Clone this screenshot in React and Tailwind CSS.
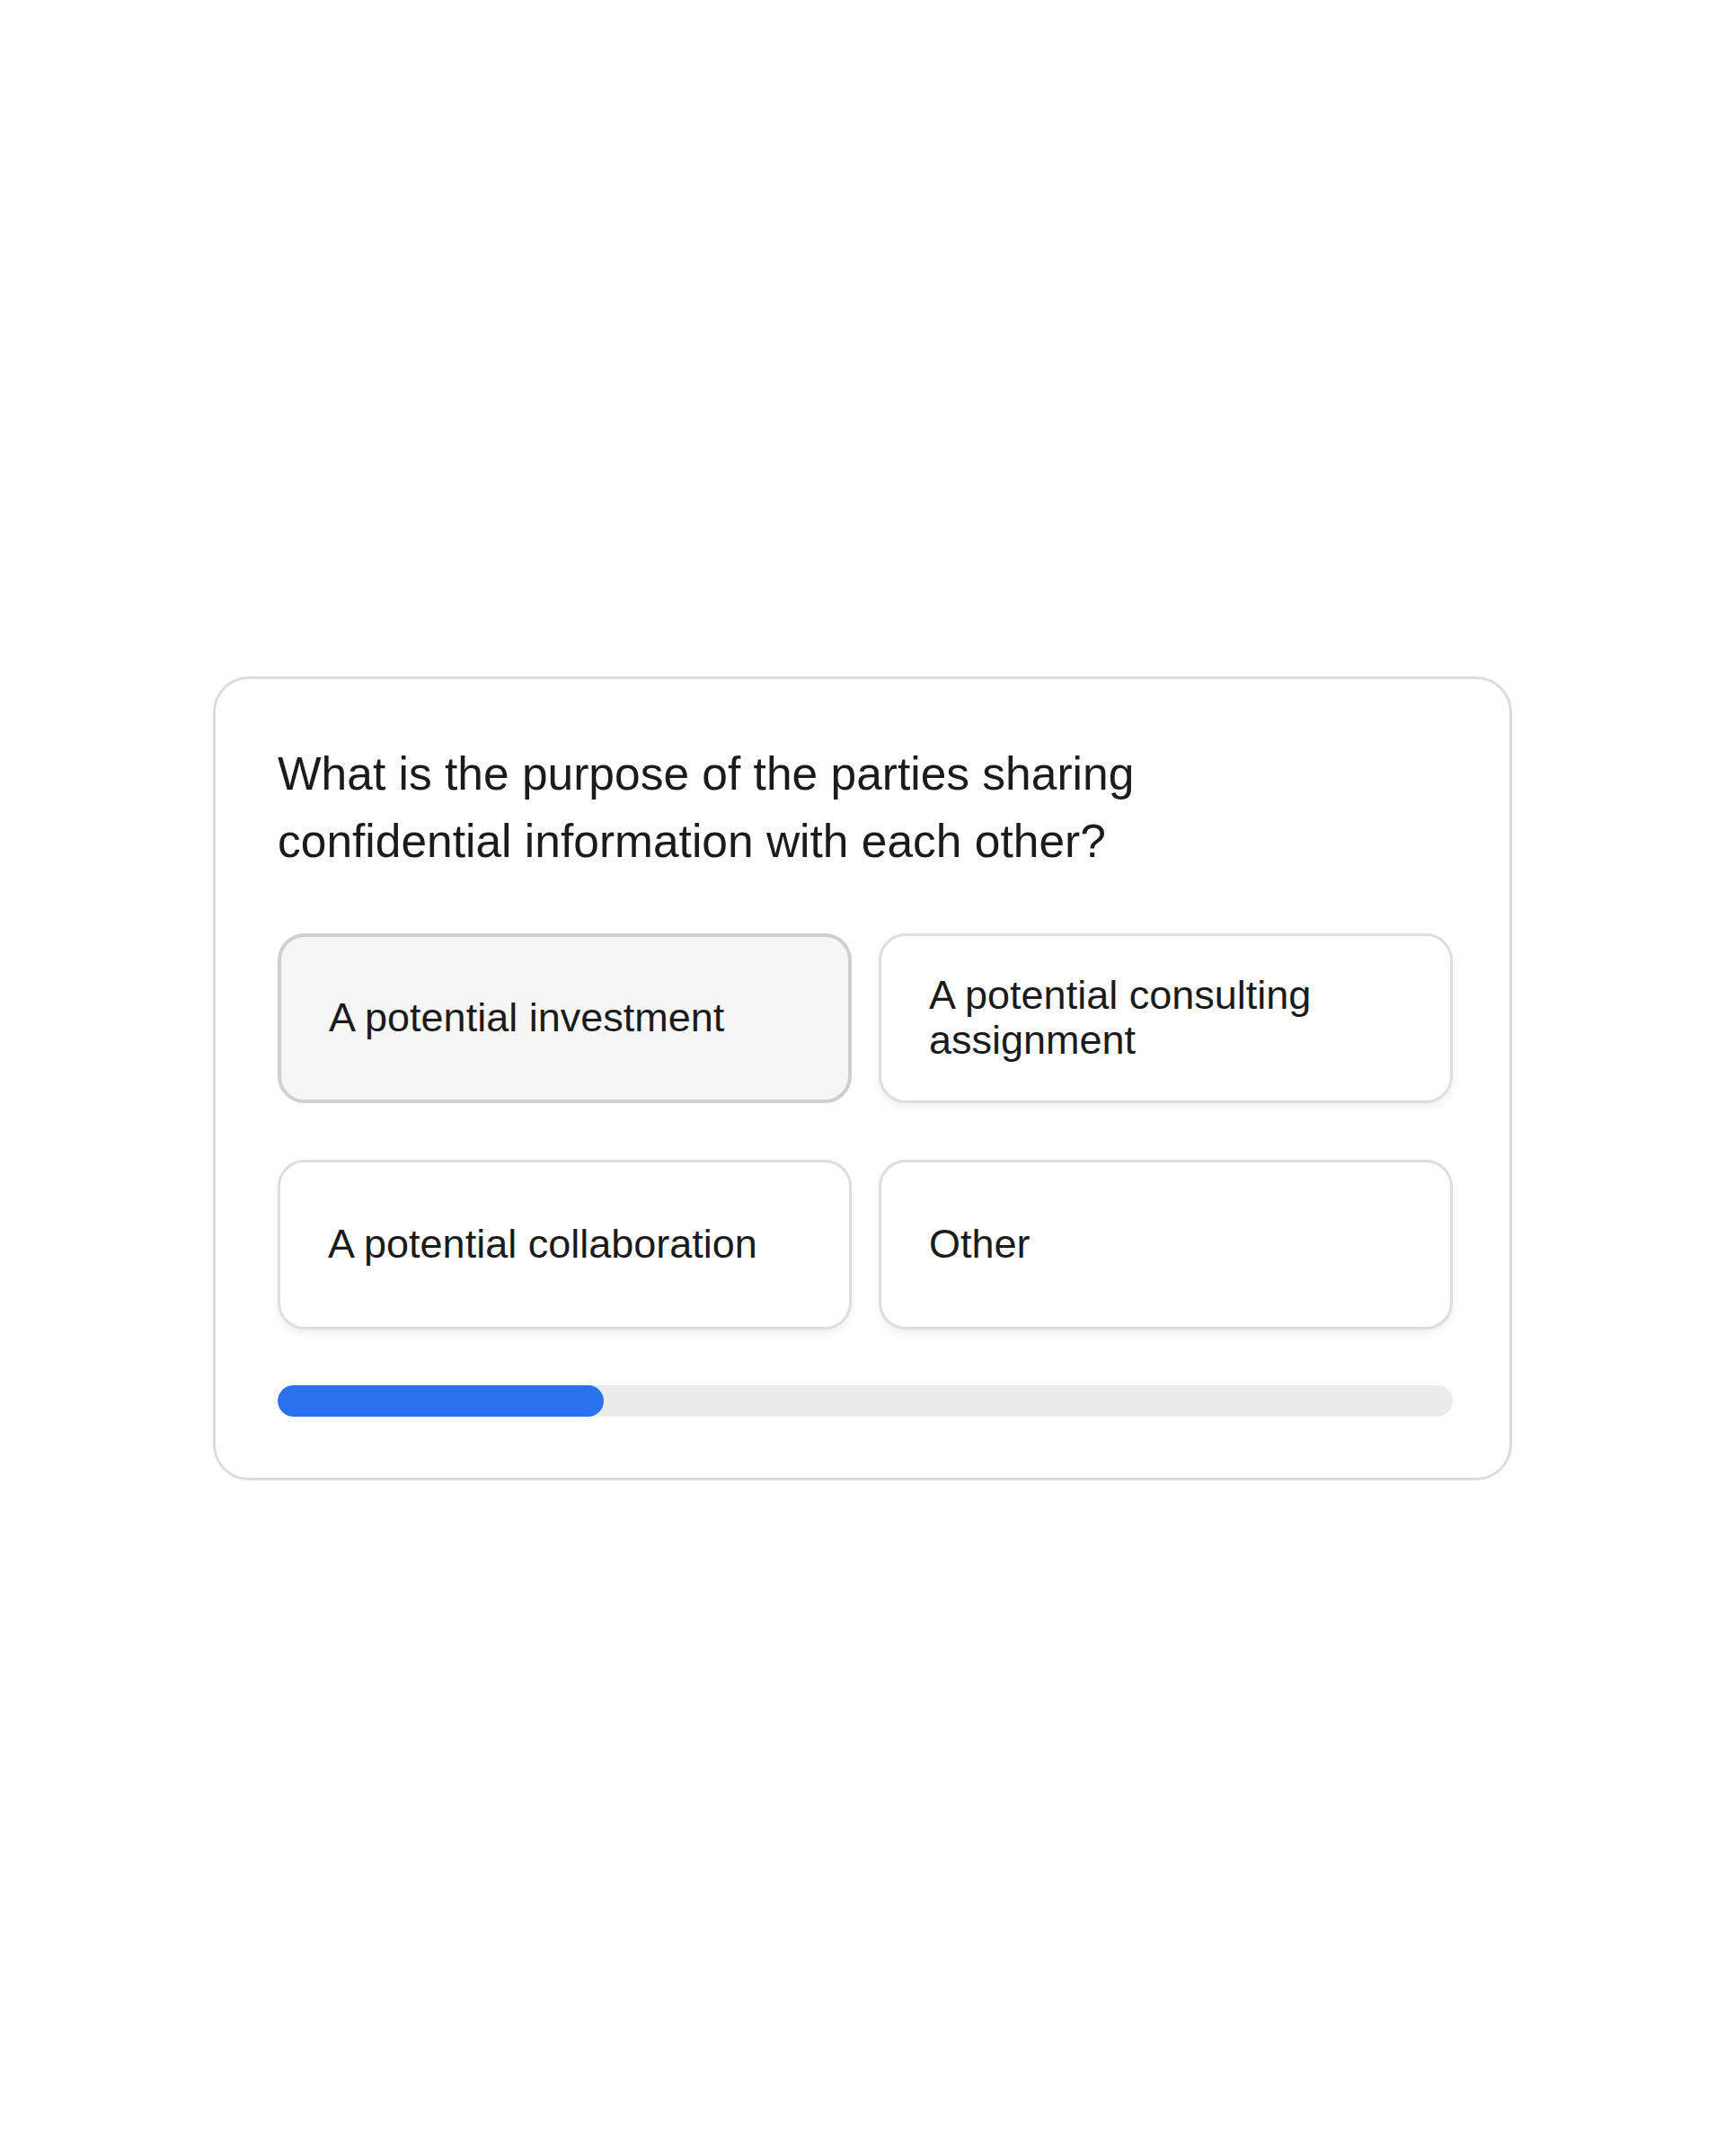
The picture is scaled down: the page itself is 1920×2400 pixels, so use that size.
const options = [
  { label: "A potential investment", selected: true },
  { label: "A potential consulting assignment", selected: false },
  { label: "A potential collaboration", selected: false },
  { label: "Other", selected: false },
];

function Option({ label, selected }) {
  return (
    <button
      className={
        "h-[189px] rounded-[30px] text-left px-[53px] flex items-center text-[45px] leading-[50px] text-[#1b1b1b] " +
        (selected
          ? "bg-[#f6f6f6] border-4 border-[#cfcfcf]"
          : "bg-white border-[3px] border-[#dedee2] shadow-[0_5px_10px_rgba(0,0,0,0.06)]")
      }
    >
      <span className="max-w-[480px]">{label}</span>
    </button>
  );
}

export default function App() {
  const progress = 27.75;
  return (
    <main
      className="min-h-[2400px] bg-white flex items-center justify-center"
      style={{ fontFamily: '"Liberation Sans", Arial, sans-serif' }}
    >
      <div className="w-[1446px] rounded-[40px] border-[3px] border-[#dcdcdf] bg-white pl-[69px] pr-[63px] pt-[68px] pb-[68px]">
        <h1 className="text-[51.5px] leading-[75px] font-normal text-[#1b1b1b] max-w-[1000px]">
          What is the purpose of the parties sharing confidential information with each other?
        </h1>

        <div className="mt-[65px] grid grid-cols-2 gap-x-[30px] gap-y-[63px]">
          {options.map((o) => (
            <Option key={o.label} {...o} />
          ))}
        </div>

        <div className="mt-[62px] h-[35px] w-full rounded-full bg-[#ececec] overflow-hidden">
          <div className="h-full rounded-full bg-[#2a71f0]" style={{ width: `${progress}%` }} />
        </div>
      </div>
    </main>
  );
}
